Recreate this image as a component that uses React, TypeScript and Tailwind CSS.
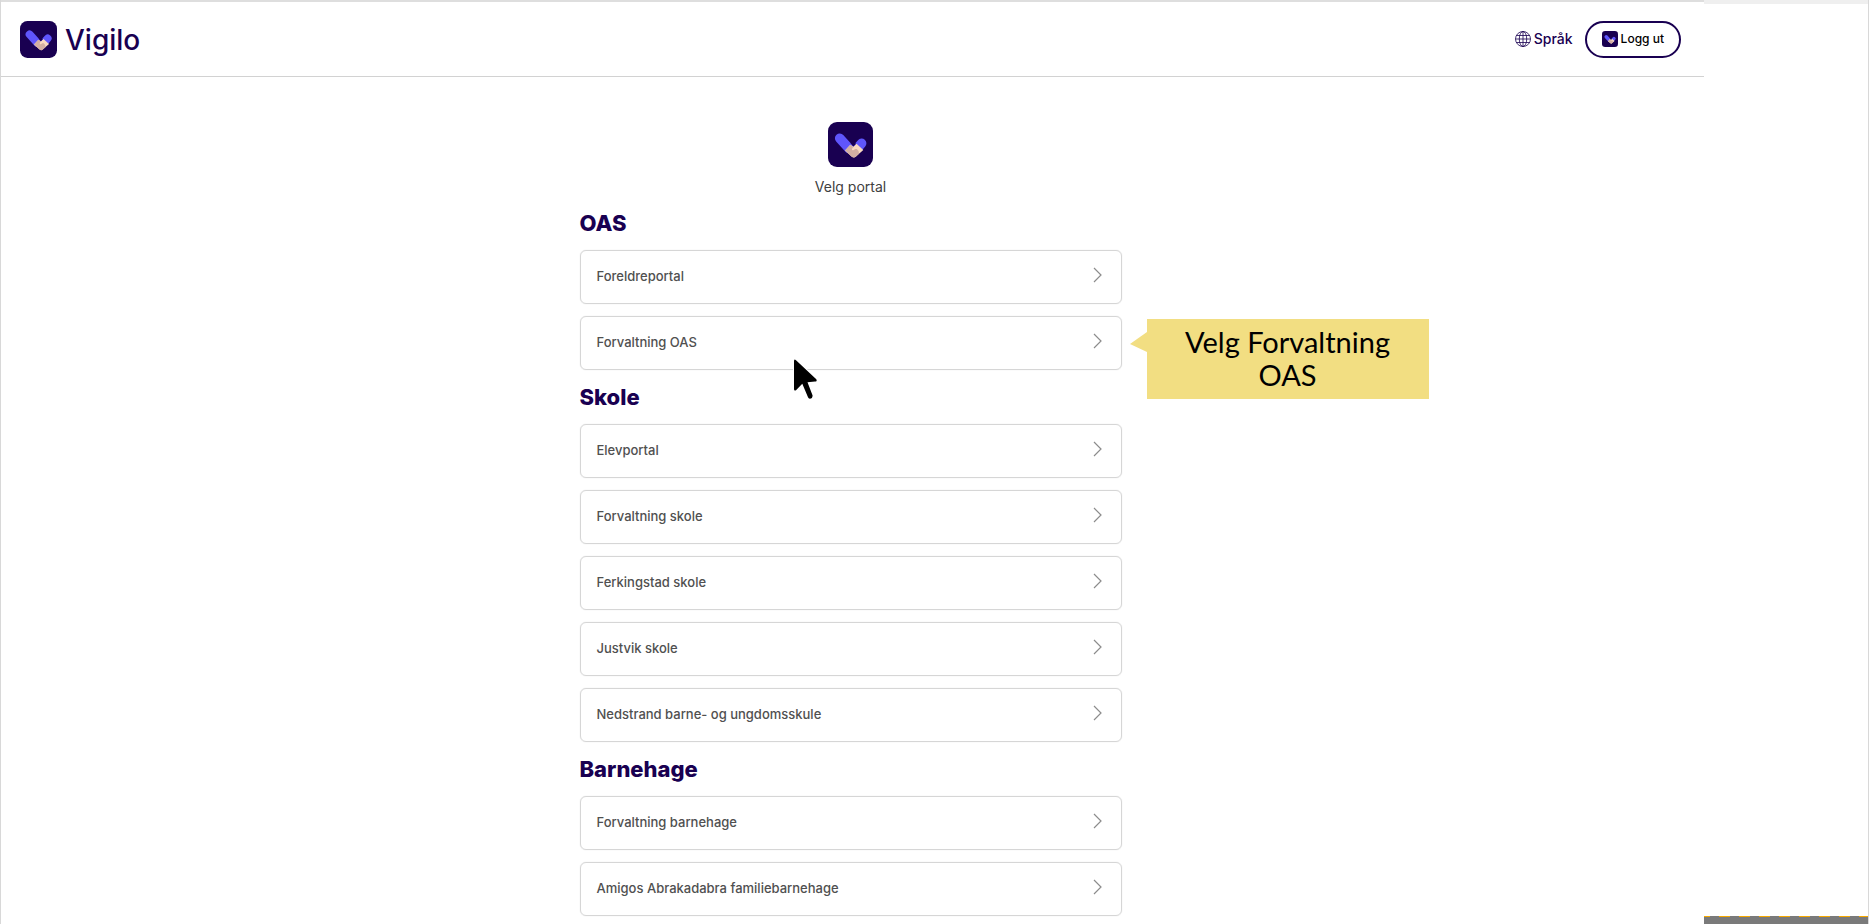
import React from 'react';

type Section = { title: string; portals: string[] };

const sections: Section[] = [
  { title: 'OAS', portals: ['Foreldreportal', 'Forvaltning OAS'] },
  {
    title: 'Skole',
    portals: ['Elevportal', 'Forvaltning skole', 'Ferkingstad skole', 'Justvik skole', 'Nedstrand barne- og ungdomsskule'],
  },
  { title: 'Barnehage', portals: ['Forvaltning barnehage', 'Amigos Abrakadabra familiebarnehage'] },
];

function Logo({ className }: { className: string }) {
  return (
    <svg viewBox="0 0 45 45" className={className} aria-hidden="true">
      <rect width="45" height="45" rx="9" fill="#190051" />
      <path d="M11.7 16.2 L21 26.5" stroke="#5f55fb" strokeWidth="9.6" strokeLinecap="round" />
      <path d="M33.6 21.3 L29.5 26" stroke="#5f55fb" strokeWidth="9.6" strokeLinecap="round" />
      <path d="M22.3 22.8 L25.3 24.8 L28.5 21.8 L35.3 28 L28 34.5 Q26 36.4 23.8 34.8 L17 28.5 Z" fill="#f9d9c0" />
      <path
        d="M22.3 22.8 L25.3 25 Q23.3 27.4 24.2 28 Q25.5 28.7 27 27 L28.8 27 Q31.3 28.6 31 31.8 L28 34.5 Q26 36.4 23.8 34.8 L17 28.5 Z"
        fill="#d3afa3"
      />
      <path d="M22.5 21 L25.4 24.6 L28.3 21.5 Z" fill="#190051" />
    </svg>
  );
}

function Globe() {
  return (
    <svg viewBox="0 0 16 16" className="size-4" fill="none" stroke="#190051" strokeWidth="0.8" aria-hidden="true">
      <circle cx="8" cy="8" r="7.5" />
      <ellipse cx="8" cy="8" rx="3.7" ry="7.5" />
      <path d="M8 .5v15M.5 8h15M1.5 4.5h13M1.5 11.5h13" />
    </svg>
  );
}

function Callout() {
  return (
    <div className="absolute left-full top-0 ml-2 mt-[3px] flex items-start">
      <svg viewBox="0 0 17 20" className="mt-[13px] h-5 w-[17px]" aria-hidden="true">
        <path d="M17 0v20L0 12z" fill="#f2de82" />
      </svg>
      <p className="w-[282px] bg-[#f2de82] px-8 pb-2 pt-[6px] text-center font-['Lato',sans-serif] text-[29px] leading-[33px] text-black">
        Velg Forvaltning OAS
      </p>
    </div>
  );
}

function Pointer() {
  return (
    <svg viewBox="0 0 26 42" className="absolute left-[212px] top-[42px] z-10 h-[42px] w-[26px]" aria-hidden="true">
      <path
        d="M2 3.2Q2 0.5 4 2.2L24.3 21.2Q25.5 23.3 23 23.6L15.5 24.3L20.6 37.4Q20.5 40.5 17.8 40.7Q16.5 40.5 16 39.2L10.3 25.8L4 32.3Q2 33.3 2 31Z"
        fill="#000"
        stroke="#fff"
        strokeWidth="2"
        paintOrder="stroke"
      />
    </svg>
  );
}

function PortalLink({ name }: { name: string }) {
  return (
    <a
      href="#"
      className="flex h-[54px] items-center justify-between rounded-md border border-[#d6d6d6] px-4 text-[13px] font-medium text-[#505050] shadow-[0_0_1px_#d0d0d0]"
    >
      {name}
      <svg viewBox="0 0 9 16" className="mb-1 mr-[3px] h-4 w-[9px]" fill="none" stroke="#8c8c8c" strokeWidth="1.2" aria-hidden="true">
        <path d="M1 1l7 7-7 7" />
      </svg>
    </a>
  );
}

export default function App() {
  return (
    <div className="flex min-h-screen border-x border-[#d8d8d8] bg-white font-['Inter',sans-serif]">
      <div className="h-screen min-w-0 flex-1 overflow-hidden border-t-2 border-[#dedede]">
        <header className="flex h-[75px] items-center justify-between border-b border-[#d2d2d2] pl-[19px] pr-[23px]">
          <a href="#" className="flex items-center gap-2">
            <Logo className="size-[37px]" />
            <span className="pt-[2px] text-[28px] font-medium leading-8 text-[#190051]">Vigilo</span>
          </a>
          <div className="flex items-center gap-3">
            <button type="button" className="flex items-center gap-[3px] text-sm font-medium text-[#190051]">
              <Globe />
              Språk
            </button>
            <button
              type="button"
              className="flex h-[37px] items-center gap-[3px] rounded-full border-2 border-[#190051] px-[15px] text-xs font-medium text-black"
            >
              <Logo className="size-4" />
              Logg ut
            </button>
          </div>
        </header>
        <div className="pr-1">
          <main className="mx-auto w-[542px] pt-[45px]">
            <div className="flex flex-col items-center gap-[10px]">
              <Logo className="size-[45px]" />
              <h1 className="text-sm leading-[19px] text-[#404040]">Velg portal</h1>
            </div>
            {sections.map((section) => (
              <section key={section.title}>
                <h2 className="flex h-[54px] items-center text-[22px] font-extrabold text-[#190051]">{section.title}</h2>
                <ul className="flex flex-col gap-3">
                  {section.portals.map((name) => (
                    <li key={name} className="relative">
                      <PortalLink name={name} />
                      {name === 'Forvaltning OAS' && (
                        <>
                          <Callout />
                          <Pointer />
                        </>
                      )}
                    </li>
                  ))}
                </ul>
              </section>
            ))}
          </main>
        </div>
      </div>
      <aside className="flex h-screen w-[164px] flex-col justify-between">
        <div className="h-1 bg-[#efefef]" />
        <div className="h-2 bg-[#7a7a7a]">
          <div className="h-px bg-[repeating-linear-gradient(90deg,#f5a800_0_6px,#7a7a7a_6px_15px,#f5a800_15px_20px)]" />
        </div>
      </aside>
    </div>
  );
}
